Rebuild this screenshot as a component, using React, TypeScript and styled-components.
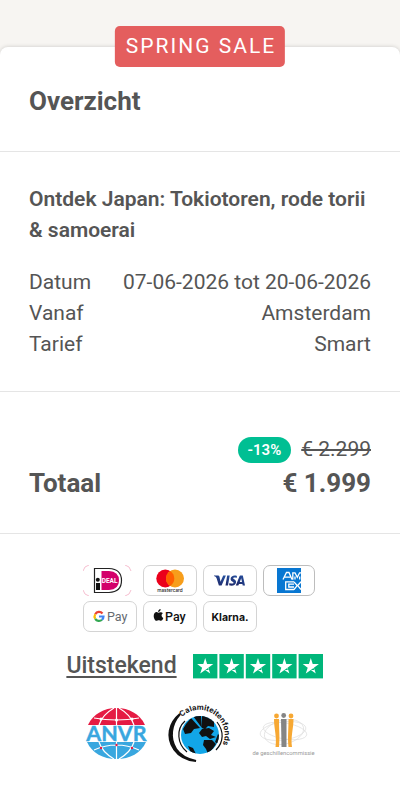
import React from "react";
import styled, { createGlobalStyle } from "styled-components";

const GlobalStyle = createGlobalStyle`
  *, *::before, *::after { box-sizing: border-box; }
  body {
    margin: 0;
    background: #f7f5f2;
    color: #555;
    font-family: Roboto, "Liberation Sans", sans-serif;
    font-size: 21px;
    line-height: 31px;
  }
`;

const Page = styled.main`
  padding-top: 47px;
`;

const Card = styled.article`
  position: relative;
  min-height: calc(100vh - 47px);
  background: #fff;
  border-radius: 8px 8px 0 0;
  box-shadow: 0 0 4px rgba(0, 0, 0, 0.18);
`;

const SaleBadge = styled.div`
  position: absolute;
  top: -21px;
  left: 50%;
  transform: translateX(-50%);
  padding: 5px 9px 5px 11px;
  border-radius: 5px;
  background: #e45e5e;
  color: #fff;
  letter-spacing: 2px;
  text-transform: uppercase;
  white-space: nowrap;
`;

const Section = styled.section<{ $top?: number; $bottom?: number }>`
  padding: ${(p) => p.$top ?? 32}px 29px ${(p) => p.$bottom ?? 32}px;
  border-bottom: 1px solid #e5e5e5;
`;

const Heading = styled.h2`
  margin: 0;
  font-size: 26px;
  line-height: 36px;
  font-weight: 700;
`;

const TripTitle = styled.h3`
  margin: 0 0 21px;
  font-size: 21px;
  line-height: 31px;
  font-weight: 600;
`;

const Details = styled.dl`
  margin: 0;
`;

const DetailRow = styled.div`
  display: flex;
  justify-content: space-between;
  dd { margin: 0; }
`;

const DiscountRow = styled.div`
  display: flex;
  justify-content: flex-end;
  align-items: center;
  gap: 10px;
`;

const Discount = styled.span`
  padding: 0 10px;
  border-radius: 13px;
  background: #00bf93;
  color: #fff;
  font-size: 15px;
  line-height: 26px;
  font-weight: 600;
`;

const TotalRow = styled.div`
  display: flex;
  justify-content: space-between;
  font-size: 26px;
  line-height: 36px;
  font-weight: 700;
`;

const Footer = styled.footer`
  display: flex;
  flex-direction: column;
  align-items: center;
  padding: 31px 29px 24px;
`;

const Payments = styled.ul`
  display: grid;
  grid-template-columns: repeat(4, 54px);
  gap: 5px 6px;
  margin: 0;
  padding: 0;
  list-style: none;
`;

const PaymentCard = styled.li<{ $frame?: string; $width?: number }>`
  width: ${(p) => p.$width ?? 54}px;
  height: 31px;
  border: 1px solid ${(p) => p.$frame ?? "#d4d4d4"};
  border-radius: 7px;
  svg { display: block; margin: -1px; }
`;

const Review = styled.div`
  display: flex;
  align-items: center;
  gap: 16px;
  margin-top: 17px;
  margin-right: 11px;
`;

const ReviewLink = styled.a`
  color: #555;
  font-size: 23px;
  line-height: 34px;
  font-weight: 500;
  text-decoration: underline;
  text-decoration-thickness: 2px;
  text-underline-offset: 3px;
`;

const StarRow = styled.svg`
  display: block;
`;

const Marks = styled.div`
  display: flex;
  align-items: center;
  gap: 20px;
  margin-top: 21px;
  svg { display: block; overflow: visible; }
`;

const Ideal = () => (
  <svg width="54" height="31" viewBox="0 0 54 31" role="img" aria-label="iDEAL">
    <path d="M0 6Q1 1 6 0M42 0Q47 1 48 6M0 25Q1 30 6 31M42 31Q47 30 48 25" fill="none" stroke="#f6bfd0" />
    <path d="M11.500 3.500H26Q38.500 4 38.500 15.500T26 27.500H11.500Z" fill="#fff" stroke="#222" strokeWidth="1.200" />
    <path d="M18.500 6H26Q36 6.500 36 15.500T26 25H18.500Z" fill="#d3006b" />
    <circle cx="14.800" cy="14.700" r="2" fill="#111" />
    <path d="M13 18h4v7h-4z" fill="#111" />
    <text x="18.700" y="17.500" fill="#fff" fontFamily="Roboto, sans-serif" fontSize="6.500" fontWeight="700">DEAL</text>
  </svg>
);

const Mastercard = () => (
  <svg width="54" height="31" viewBox="0 0 54 31" role="img" aria-label="Mastercard">
    <circle cx="22.300" cy="13.500" r="9" fill="#eb001b" />
    <circle cx="32" cy="13.500" r="9" fill="#f79e1b" />
    <path d="M27.150 5.920a9 9 0 0 1 0 15.160a9 9 0 0 1 0-15.160Z" fill="#ff5f00" />
    <text x="27" y="26.500" textAnchor="middle" fill="#222" fontFamily="Inter, sans-serif" fontSize="4.700" fontWeight="500">mastercard</text>
  </svg>
);

const Visa = () => (
  <svg width="54" height="31" viewBox="0 0 54 31" role="img" aria-label="Visa">
    <defs>
      <linearGradient id="visa" x1="0" x2="1" y1="1" y2="0">
        <stop stopColor="#1d2260" />
        <stop offset="1" stopColor="#2754a4" />
      </linearGradient>
    </defs>
    <g fill="url(#visa)">
      <path d="M11 10.500h4q1.200 0 1.500 1.200l1 5.100 2.700-6.300h2.700l-4.300 10h-2.700L13.500 12.900Q13 11.600 11 11.100Z" />
      <path d="M24.200 10.500h2.500l-1.700 10h-2.500Z" />
      <path d="M34 10.900l-.4 2.100c-1.800-.8-3.400-.5-3.400.2 0 1 2.900 1.400 2.900 3.800 0 3.300-4 4.300-7 3.200l.4-2.200c2 1 4 .7 4-.3 0-1.100-2.900-1.300-2.900-3.700 0-3 3.500-4.200 6.400-3.100Z" />
      <path d="M37.300 10.500h2.500l2.200 10h-2.300l-.3-1.500H36l-.7 1.500h-2.500l3.700-9.200q.2-.8.800-.8ZM38.200 13.200l-1.400 3.900h2.200Z" />
    </g>
  </svg>
);

const Amex = () => (
  <svg width="52" height="31" viewBox="0 0 52 31" role="img" aria-label="American Express">
    <path d="M14 3h24v25H14z" fill="#0877d2" />
    <g fill="none" stroke="#fff" strokeWidth="1.300">
      <path d="M20 14.500l3.500-7h2.500l3 7M21.700 12.200h5.600M29.800 14.800V7.800h2.200l2.300 4.500 2.300-4.500H38M32 14.500v-3M36.700 14.500v-3" />
      <path d="M31 16.800h-8.300v7.700H31M31 19.200h-5.200v2.800H31M31 16.800l3.200 3.800-3.200 3.900M38 16.800l-3.300 3.800 3.300 3.900" />
    </g>
  </svg>
);

const GooglePay = () => (
  <svg width="54" height="31" viewBox="0 0 54 31" role="img" aria-label="Google Pay">
    <g fill="none" strokeWidth="2.200">
      <path d="M19.500 12.500A4.500 4.500 0 0 0 12.200 13.200" stroke="#ea4335" />
      <path d="M12.200 13.200a4.500 4.500 0 0 0 0 4.600" stroke="#fbbc04" />
      <path d="M12.200 17.800A4.500 4.500 0 0 0 19 18.800" stroke="#34a853" />
      <path d="M16 15.500h4.500a4.500 4.500 0 0 1-1.500 3.300" stroke="#4285f4" />
    </g>
    <text x="24" y="20" fill="#656a70" fontFamily="Roboto, sans-serif" fontSize="12.500">Pay</text>
  </svg>
);

const ApplePay = () => (
  <svg width="54" height="31" viewBox="0 0 54 31" role="img" aria-label="Apple Pay">
    <g transform="translate(-1 0)">
      <path d="M16.100 11.800c.9 0 1.700-.7 2.600-.6 1 0 1.700.4 2.200 1.100-1.900 1.200-1.600 3.800.4 4.600-.4 1.200-1.300 2.900-2.400 2.900-.8 0-1.200-.5-2.200-.5s-1.400.5-2.200.5c-1.400 0-2.800-2.600-2.800-4.900 0-2.500 1.500-3.800 2.900-3.800.6 0 1.100.5 1.500.7ZM16.100 10.900c0-1.600 1.200-2.900 2.500-3 .2 1.600-1.100 3-2.500 3Z" fill="#111" />
    </g>
    <text x="22" y="19.500" fill="#111" fontFamily="Roboto, sans-serif" fontSize="12.500" fontWeight="500">Pay</text>
  </svg>
);

const Klarna = () => (
  <svg width="54" height="31" viewBox="0 0 54 31" role="img" aria-label="Klarna">
    <text x="27" y="19.500" textAnchor="middle" fill="#111" fontFamily="Inter, sans-serif" fontSize="10.500" fontWeight="700">Klarna.</text>
  </svg>
);

const Stars = () => (
  <StarRow width="130" height="25" viewBox="0 0 130 25" role="img" aria-label="5 van 5 sterren">
    {[0, 1, 2, 3, 4].map((n) => (
      <g key={n} transform={`translate(${n * 26.4} 0)`}>
        <path d="M0 0h24.400v24.400H0z" fill="#00b67a" />
        <path d="M12.200 4l1.900 6h6.200l-5 3.700 1.900 5.900-5-3.700-5 3.700 1.900-5.900-5-3.700h6.200Z" fill="#fff" />
        <path d="M12.200 15.900l2.800-1.800.6 1.900Z" fill="#00b67a" />
      </g>
    ))}
  </StarRow>
);

const Anvr = () => (
  <svg width="63" height="52" viewBox="0 0 63 52" role="img" aria-label="ANVR">
    <path d="M3 17C8 6 19 0 31.500 0S55 6 60 17Z" fill="#e51b43" />
    <path d="M2 34C7 45 18 51 31.500 51S56 45 61 34Z" fill="#39a7df" />
    <g fill="none" stroke="#fff" strokeWidth="1.200">
      <path d="M31.500 0V17M31.500 34V51M9 10Q31.500 14 54 10M9 42Q31.500 32 54 42M29 0Q17 7 14 17M34 0Q46 7 49 17M14 34Q17 44 29 51M49 34Q46 44 34 51" />
    </g>
    <g fill="#fff"><circle cx="16" cy="11" r="1.500" /><circle cx="31.500" cy="12" r="1.500" /><circle cx="47" cy="11" r="1.500" /></g>
    <g fill="#e51b43"><circle cx="16" cy="40" r="1.200" /><circle cx="31.500" cy="37" r="1.200" /><circle cx="47" cy="40" r="1.200" /></g>
    <text x="31.500" y="33" textAnchor="middle" fill="#39a7df" stroke="#39a7df" strokeWidth=".4" fontFamily="Lato, sans-serif" fontSize="21.500" fontWeight="700">ANVR</text>
  </svg>
);

const Calamiteitenfonds = () => (
  <svg width="64" height="60" viewBox="0 0 64 60" role="img" aria-label="Calamiteitenfonds">
    <defs>
      <path id="fund-arc" d="M14 13A25 25 0 1 1 49 49" />
      <clipPath id="globe"><circle cx="32" cy="31" r="19" /></clipPath>
    </defs>
    <path d="M12 10C1 19-2 33 6 45c5 7 13 11 22 12-9-2-16-6-20-12C1 34 3 20 12 10Z" fill="#111" stroke="#111" strokeWidth="2.200" />
    <path d="M17 17C8 25 9 40 19 48M49 18c7 9 7 20-1 28" fill="none" stroke="#111" strokeWidth="1.200" />
    <circle cx="32" cy="31" r="19" fill="#12a6e8" />
    <g clipPath="url(#globe)" fill="#111">
      <path d="M18 20l5-6 9 10-6 1-3 4-6 1-2-5ZM25 12h8l1 12ZM34 11h4l8 4v8l-6-1-3 3-3-1ZM34 25l7-1 5 3-3 4 5 2-6 2-4-3-4 1-3-4ZM36 36l8 0 4 4-4 6-4 4-2-5-3-4ZM20 42l5 2 3 6-5-1ZM50 30l3 3-2 8-4-3Z" />
    </g>
    <text fill="#111" fontFamily="Inter, sans-serif" fontSize="7.600" fontWeight="700">
      <textPath href="#fund-arc">Calamiteitenfonds</textPath>
    </text>
  </svg>
);

const Geschillencommissie = () => (
  <svg width="64" height="52" viewBox="0 0 64 52" role="img" aria-label="de geschillencommissie">
    <g fill="none" stroke="#ddd" strokeWidth=".7">
      <ellipse cx="31" cy="23" rx="23" ry="9" transform="rotate(-8 31 23)" />
      <ellipse cx="33" cy="23" rx="22" ry="8" transform="rotate(10 33 23)" />
      <ellipse cx="32" cy="24" rx="20" ry="12" transform="rotate(-14 32 24)" />
    </g>
    <g fill="#f7a833">
      <circle cx="24.500" cy="8" r="2.400" />
      <path d="M22 11h5c0 12 1 18 0 28h-3.500c1.500-10-1.500-18-1.500-28Z" />
      <circle cx="39" cy="8" r="2.400" />
      <path d="M36.500 11h5c0 10-3 18-1.500 28h-3.500c-1-10 0-16 0-28Z" />
    </g>
    <g fill="#858585"><circle cx="31.700" cy="7.500" r="2.400" /><path d="M29 11h5.500v28H29.500Z" /></g>
    <text x="31.500" y="47" textAnchor="middle" fill="#999" fontFamily="Roboto, sans-serif" fontSize="5.800">de geschillencommissie</text>
  </svg>
);

const details = [
  ["Datum", "07-06-2026 tot 20-06-2026"],
  ["Vanaf", "Amsterdam"],
  ["Tarief", "Smart"],
];

export default function App() {
  return (
    <Page>
      <GlobalStyle />
      <Card>
        <SaleBadge>Spring sale</SaleBadge>
        <Section $top={36}>
          <Heading>Overzicht</Heading>
        </Section>
        <Section $bottom={31}>
          <TripTitle>Ontdek Japan: Tokiotoren, rode torii &amp; samoerai</TripTitle>
          <Details>
            {details.map(([label, value]) => (
              <DetailRow key={label}>
                <dt>{label}</dt>
                <dd>{value}</dd>
              </DetailRow>
            ))}
          </Details>
        </Section>
        <Section $top={42}>
          <DiscountRow>
            <Discount>-13%</Discount>
            <s>€ 2.299</s>
          </DiscountRow>
          <TotalRow>
            <span>Totaal</span>
            <span>€ 1.999</span>
          </TotalRow>
        </Section>
        <Footer>
          <Payments>
            <PaymentCard $frame="transparent"><Ideal /></PaymentCard>
            <PaymentCard><Mastercard /></PaymentCard>
            <PaymentCard><Visa /></PaymentCard>
            <PaymentCard $frame="#bdbdbd" $width={52}><Amex /></PaymentCard>
            <PaymentCard><GooglePay /></PaymentCard>
            <PaymentCard><ApplePay /></PaymentCard>
            <PaymentCard><Klarna /></PaymentCard>
          </Payments>
          <Review>
            <ReviewLink href="#reviews">Uitstekend</ReviewLink>
            <Stars />
          </Review>
          <Marks>
            <Anvr />
            <Calamiteitenfonds />
            <Geschillencommissie />
          </Marks>
        </Footer>
      </Card>
    </Page>
  );
}
